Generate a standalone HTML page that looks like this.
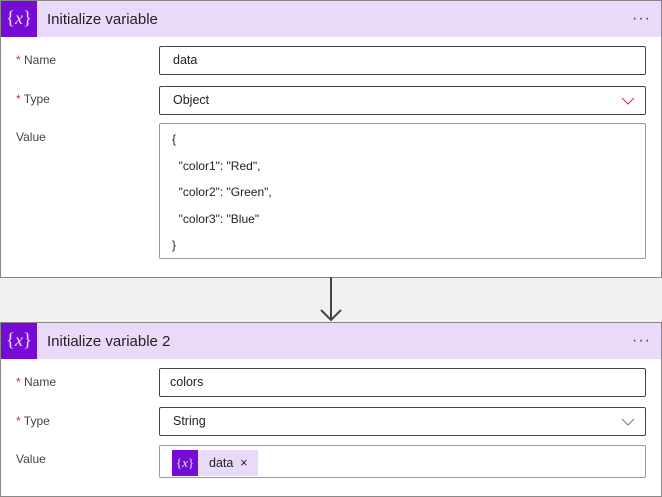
<!DOCTYPE html>
<html><head><style>
body{margin:0;width:662px;height:497px;background:#f1f1f1;font-family:"Liberation Sans",sans-serif;position:relative;overflow:hidden}
.card{position:absolute;left:0;width:660px;background:#fff;border:1px solid #8a8886}
.hdr{position:absolute;left:0;top:0;width:660px;height:36px;background:#eadaf9}
.ic{position:absolute;left:0;top:0;width:36px;height:36px;background:#770bd6;color:#e9dcf7;font-family:"Liberation Serif",serif;font-size:19px;line-height:34px;text-align:center}
.ic i{font-size:18px}
.ttl{position:absolute;left:46px;top:10px;font-size:15px;color:#222}
.dots{position:absolute;right:10px;top:9px;font-size:16px;color:#444;letter-spacing:1px}
.lbl{position:absolute;left:15px;font-size:12px;color:#444}
.lbl b{color:#c4314b;font-weight:normal}
.inp{position:absolute;left:158px;width:487px;border:1px solid #444;border-radius:2px;font-size:12.5px;color:#222;box-sizing:border-box;padding-left:13px}
.chev{position:absolute;right:10px;top:9px}
</style></head><body>
<div class="card" style="top:0;height:276px">
<div class="hdr"><div class="ic">{<i>x</i>}</div><div class="ttl">Initialize variable</div><div class="dots">···</div></div>
<div class="lbl" style="top:52px"><b>*</b> Name</div>
<div class="inp" style="top:45px;height:29px;line-height:27px">data</div>
<div class="lbl" style="top:91px"><b>*</b> Type</div>
<div class="inp" style="top:85px;height:29px;line-height:27px">Object<svg class="chev" width="14" height="10"><path d="M1 2L7 8L13 2" fill="none" stroke="#c4314b" stroke-width="1"/></svg></div>
<div class="lbl" style="top:129px">Value</div>
<div class="inp" style="top:122px;height:136px;border-color:#999;padding-left:12px;padding-top:2px;line-height:26.5px;font-size:12px">{<br>&nbsp;&nbsp;"color1": "Red",<br>&nbsp;&nbsp;"color2": "Green",<br>&nbsp;&nbsp;"color3": "Blue"<br>}</div>
</div>
<svg style="position:absolute;left:319px;top:277px" width="24" height="46"><path d="M12 0V43M2 33L12 43L22 33" fill="none" stroke="#444" stroke-width="2"/></svg>
<div class="card" style="top:322px;height:173px">
<div class="hdr"><div class="ic">{<i>x</i>}</div><div class="ttl">Initialize variable 2</div><div class="dots">···</div></div>
<div class="lbl" style="top:52px"><b>*</b> Name</div>
<div class="inp" style="top:45px;height:29px;line-height:27px;padding-left:10px">colors</div>
<div class="lbl" style="top:91px"><b>*</b> Type</div>
<div class="inp" style="top:84px;height:29px;line-height:27px">String<svg class="chev" width="14" height="10"><path d="M1 2L7 8L13 2" fill="none" stroke="#777" stroke-width="1"/></svg></div>
<div class="lbl" style="top:129px">Value</div>
<div class="inp" style="top:122px;height:33px;border-color:#999;padding:0">
<div style="position:absolute;left:12px;top:4px;width:86px;height:26px;background:#eadaf9">
<div style="position:absolute;left:0;top:0;width:26px;height:26px;background:#770bd6;color:#e9dcf7;font-family:'Liberation Serif',serif;font-size:13px;line-height:25px;text-align:center">{<i>x</i>}</div>
<div style="position:absolute;left:37px;top:6px;font-size:12.5px;color:#222">data&nbsp; ×</div></div></div>
</div>
</body></html>
